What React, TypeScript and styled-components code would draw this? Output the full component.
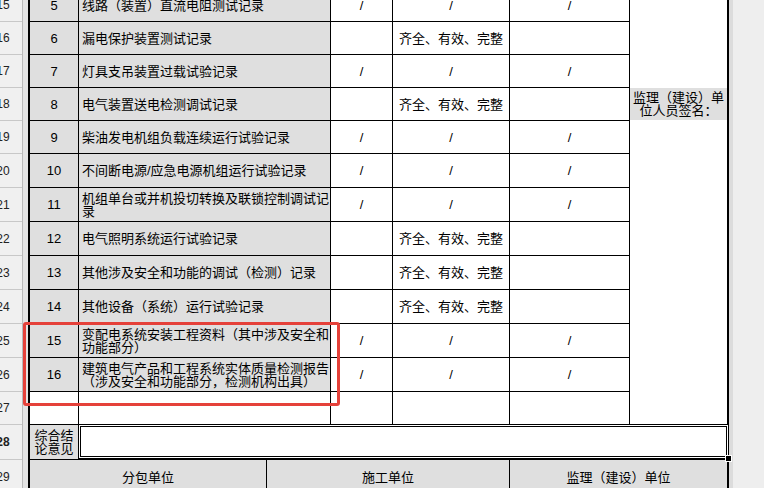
import React from "react";
import styled, { createGlobalStyle } from "styled-components";

const GlobalStyle = createGlobalStyle`
  html, body {
    margin: 0;
    padding: 0;
    background: #eeeeee;
  }
`;

const FONT = `"Liberation Sans", "Noto Sans CJK SC", sans-serif`;
const GRAY = "#dfdfdf";

type Kind = "slash" | "ok" | "empty";
interface ItemRow {
  header: number;
  no: string;
  desc: string;
  kind: Kind;
  h: number;
}

const items: ItemRow[] = [
  { header: 15, no: "5", desc: "线路（装置）直流电阻测试记录", kind: "slash", h: 32 },
  { header: 16, no: "6", desc: "漏电保护装置测试记录", kind: "ok", h: 32 },
  { header: 17, no: "7", desc: "灯具支吊装置过载试验记录", kind: "slash", h: 32 },
  { header: 18, no: "8", desc: "电气装置送电检测调试记录", kind: "ok", h: 32 },
  { header: 19, no: "9", desc: "柴油发电机组负载连续运行试验记录", kind: "slash", h: 32 },
  { header: 20, no: "10", desc: "不间断电源/应急电源机组运行试验记录", kind: "slash", h: 33 },
  { header: 21, no: "11", desc: "机组单台或并机投切转换及联锁控制调试记录", kind: "slash", h: 33 },
  { header: 22, no: "12", desc: "电气照明系统运行试验记录", kind: "ok", h: 33 },
  { header: 23, no: "13", desc: "其他涉及安全和功能的调试（检测）记录", kind: "ok", h: 33 },
  { header: 24, no: "14", desc: "其他设备（系统）运行试验记录", kind: "ok", h: 33 },
  { header: 25, no: "15", desc: "变配电系统安装工程资料（其中涉及安全和功能部分）", kind: "slash", h: 33 },
  { header: 26, no: "16", desc: "建筑电气产品和工程系统实体质量检测报告（涉及安全和功能部分，检测机构出具）", kind: "slash", h: 33 },
  { header: 27, no: "", desc: "", kind: "empty", h: 32 },
];

const Page = styled.div`
  position: relative;
  width: 764px;
  height: 488px;
  overflow: hidden;
  background: #eeeeee;
  font-family: ${FONT};
  font-size: 13px;
  color: #000;
`;

const Scroll = styled.div`
  display: flex;
  align-items: flex-start;
  margin-top: -11px;
`;

const RowHeaders = styled.div`
  flex: none;
  width: 22px;
  border-right: 1px solid #b9b9b9;
  background: #f0f0f0;
  display: flex;
  flex-direction: column;
  overflow: hidden;
`;

const HeaderCell = styled.div<{ $h: number; $active?: boolean }>`
  height: ${(p) => p.$h}px;
  box-sizing: border-box;
  border-bottom: 1px solid #c8c8c8;
  display: flex;
  align-items: center;
  overflow: hidden;
  font-family: "Liberation Sans", sans-serif;
  font-size: 12px;
  font-weight: ${(p) => (p.$active ? 700 : 400)};
  color: #222;
`;

const HeaderNum = styled.span`
  flex: none;
  width: 42px;
  margin-left: -18px;
  text-align: center;
  white-space: nowrap;
`;

const Gutter = styled.div`
  flex: none;
  width: 5px;
  align-self: stretch;
  background: #e3e3e3;
`;

const RightGutter = styled.div`
  flex: none;
  width: 4px;
  align-self: stretch;
  background: #dcdcdc;
`;

const Sheet = styled.div`
  flex: none;
  width: 701px;
  display: flex;
  flex-direction: column;
`;

const ItemGrid = styled.div`
  display: grid;
  grid-template-columns: 48px 251px 61px 116px 119px 97px;
  grid-template-rows: repeat(5, 32px) repeat(7, 33px) 32px;
  gap: 1px;
  background: #000;
  border-left: 2px solid #000;
  border-right: 2px solid #000;
`;

const Cell = styled.div<{ $tone: "gray" | "white"; $align: "left" | "center" }>`
  background: ${(p) => (p.$tone === "gray" ? GRAY : "#fff")};
  display: flex;
  align-items: center;
  justify-content: ${(p) => (p.$align === "left" ? "flex-start" : "center")};
  padding-left: ${(p) => (p.$align === "left" ? "3px" : "0")};
  text-align: ${(p) => p.$align};
  line-height: 13px;
  overflow: hidden;
`;

const SignCell = styled.div`
  grid-column: 6;
  grid-row: 1 / -1;
  background: #fff;
  padding-top: 99px;
  display: flex;
  flex-direction: column;
`;

const SignLabel = styled.div`
  height: 32px;
  background: ${GRAY};
  display: flex;
  align-items: center;
  justify-content: center;
  text-align: center;
  line-height: 13px;
`;

const SummaryRow = styled.div`
  display: flex;
  height: 35px;
  border-left: 2px solid #000;
`;

const SummaryLabel = styled.div`
  flex: none;
  width: 48px;
  box-sizing: border-box;
  border-top: 1px solid #000;
  background: ${GRAY};
  display: flex;
  align-items: center;
  justify-content: center;
  text-align: center;
  line-height: 13px;
`;

const SummaryField = styled.div`
  position: relative;
  flex: 1;
  box-sizing: border-box;
  background: #fff;
  border: 3px double #000;
`;

const Handle = styled.div`
  position: absolute;
  right: -6px;
  bottom: -6px;
  width: 5px;
  height: 5px;
  background: #000;
  border: 1px solid #fff;
`;

const SignoffRow = styled.div`
  display: grid;
  grid-template-columns: 236px 242px 217px;
  gap: 1px;
  height: 35px;
  background: #000;
  border-left: 2px solid #000;
  border-right: 2px solid #000;
  border-top: 1px solid #000;
`;

const SignoffCell = styled.div`
  background: ${GRAY};
  display: flex;
  align-items: center;
  justify-content: center;
  line-height: 13px;
`;

const Annotation = styled.div`
  position: absolute;
  left: 23px;
  top: 322px;
  width: 317px;
  height: 84px;
  box-sizing: border-box;
  border: 3px solid #e5413a;
  border-radius: 3px;
  pointer-events: none;
`;

const OK_TEXT = "齐全、有效、完整";

function statusCells(kind: Kind): string[] {
  if (kind === "slash") return ["/", "/", "/"];
  if (kind === "ok") return ["", OK_TEXT, ""];
  return ["", "", ""];
}

export default function App() {
  const headerRows = [
    ...items.map((r) => ({ n: r.header, h: r.h + 1, active: false })),
    { n: 28, h: 35, active: true },
    { n: 29, h: 35, active: false },
  ];

  return (
    <>
      <GlobalStyle />
      <Page>
        <Scroll>
          <RowHeaders>
            {headerRows.map((r) => (
              <HeaderCell key={r.n} $h={r.h} $active={r.active}>
                <HeaderNum>{r.n}</HeaderNum>
              </HeaderCell>
            ))}
          </RowHeaders>
          <Gutter />
          <Sheet>
            <ItemGrid>
              <SignCell>
                <SignLabel>监理（建设）单位人员签名：</SignLabel>
              </SignCell>
              {items.map((r) => {
                const tone = r.kind === "empty" ? "white" : "gray";
                return (
                  <React.Fragment key={r.header}>
                    <Cell $tone={tone} $align="center">{r.no}</Cell>
                    <Cell $tone={tone} $align="left">
                      <span>{r.desc}</span>
                    </Cell>
                    {statusCells(r.kind).map((t, i) => (
                      <Cell key={i} $tone="white" $align="center">
                        {t}
                      </Cell>
                    ))}
                  </React.Fragment>
                );
              })}
            </ItemGrid>
            <SummaryRow>
              <SummaryLabel>综合结论意见</SummaryLabel>
              <SummaryField>
                <Handle />
              </SummaryField>
            </SummaryRow>
            <SignoffRow>
              <SignoffCell>分包单位</SignoffCell>
              <SignoffCell>施工单位</SignoffCell>
              <SignoffCell>监理（建设）单位</SignoffCell>
            </SignoffRow>
          </Sheet>
          <RightGutter />
        </Scroll>
        <Annotation />
      </Page>
    </>
  );
}
